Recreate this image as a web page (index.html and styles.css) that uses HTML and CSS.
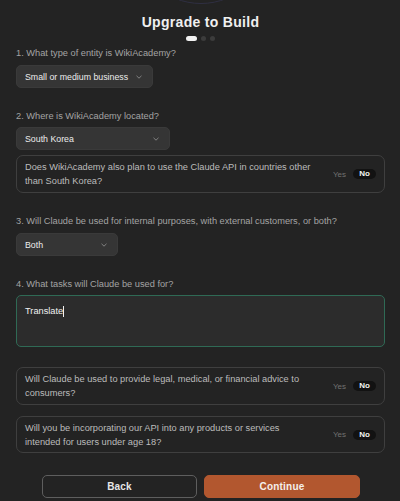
FILE: index.html
```html
<!DOCTYPE html>
<html>
<head>
<meta charset="utf-8">
<link rel="stylesheet" href="styles.css">
</head>
<body>
<div class="page">
  <div class="logo-ring"></div>
  <h1 class="title">Upgrade to Build</h1>
  <div class="steps">
    <span class="step active"></span>
    <span class="step"></span>
    <span class="step"></span>
  </div>

  <div class="q q-first">1. What type of entity is WikiAcademy?</div>
  <div class="select select-1">
    <span>Small or medium business</span>
    <svg class="chev" width="6" height="4" viewBox="0 0 6 4"><polyline points="0.5,0.8 3,3.2 5.5,0.8" fill="none" stroke="#8a8a8a" stroke-width="0.9"/></svg>
  </div>

  <div class="q">2. Where is WikiAcademy located?</div>
  <div class="select select-2">
    <span>South Korea</span>
    <svg class="chev" width="6" height="4" viewBox="0 0 6 4"><polyline points="0.5,0.8 3,3.2 5.5,0.8" fill="none" stroke="#8a8a8a" stroke-width="0.9"/></svg>
  </div>
  <div class="card card-sub">
    <p>Does WikiAcademy also plan to use the Claude API in countries other than South Korea?</p>
    <div class="toggle"><span class="yes">Yes</span><span class="no">No</span></div>
  </div>

  <div class="q">3. Will Claude be used for internal purposes, with external customers, or both?</div>
  <div class="select select-3">
    <span>Both</span>
    <svg class="chev" width="6" height="4" viewBox="0 0 6 4"><polyline points="0.5,0.8 3,3.2 5.5,0.8" fill="none" stroke="#8a8a8a" stroke-width="0.9"/></svg>
  </div>

  <div class="q">4. What tasks will Claude be used for?</div>
  <div class="textarea"><span>Translate</span><span class="caret"></span></div>

  <div class="card card-a">
    <p>Will Claude be used to provide legal, medical, or financial advice to consumers?</p>
    <div class="toggle"><span class="yes">Yes</span><span class="no">No</span></div>
  </div>
  <div class="card card-b">
    <p>Will you be incorporating our API into any products or services intended for users under age 18?</p>
    <div class="toggle"><span class="yes">Yes</span><span class="no">No</span></div>
  </div>

  <div class="actions">
    <button class="btn btn-back">Back</button>
    <button class="btn btn-continue">Continue</button>
  </div>
</div>
</body>
</html>
```

FILE: styles.css
```css
html, body {
  margin: 0;
  padding: 0;
  background: #232323;
}
body {
  width: 400px;
  height: 501px;
  overflow: hidden;
  font-family: "Liberation Sans", Arial, sans-serif;
}
.page {
  padding: 0 15px 0 16px;
  display: flex;
  flex-direction: column;
  align-items: flex-start;
}
.logo-ring {
  align-self: center;
  width: 136px;
  height: 136px;
  margin-top: -132px;
  border: 1px solid #2f2f42;
  border-radius: 50%;
  box-sizing: border-box;
  flex-shrink: 0;
}
.title {
  align-self: center;
  margin: 8px 0 0;
  font-size: 14px;
  line-height: 20px;
  font-weight: 700;
  letter-spacing: 0.3px;
  color: #f0f0f0;
}
.steps {
  align-self: center;
  display: flex;
  gap: 4px;
  margin-top: 4px;
  height: 5px;
}
.step {
  width: 5px;
  height: 5px;
  border-radius: 3px;
  background: #3c3c3c;
}
.step.active {
  width: 11px;
  background: #f2f2f2;
}
.q {
  margin-top: 22px;
  font-size: 9.25px;
  line-height: 12px;
  color: #a3a3a3;
}
.q-first {
  margin-top: 6px;
}
.select {
  margin-top: 6px;
  height: 23px;
  box-sizing: border-box;
  padding: 0 10px 0 8px;
  display: flex;
  align-items: center;
  justify-content: space-between;
  background: #353535;
  border: 1px solid #3a3a3a;
  border-radius: 5px;
  font-size: 8.8px;
  color: #ececec;
}
.select-1 { width: 137px; }
.select-2 { width: 154px; margin-top: 5px; }
.select-3 { width: 102px; }
.chev { display: block; }
.card {
  align-self: stretch;
  margin-top: 5px;
  height: 38px;
  box-sizing: border-box;
  padding: 0 8px 0 8px;
  display: flex;
  align-items: center;
  justify-content: space-between;
  border: 1px solid #3f3f3f;
  border-radius: 7px;
}
.card p {
  margin: 0;
  width: 292px;
  font-size: 9.25px;
  line-height: 14px;
  color: #bcbcbc;
}
.card-a { margin-top: 20px; }
.card-b { margin-top: 11px; height: 37px; }
.toggle {
  display: flex;
  align-items: center;
  gap: 7px;
  font-size: 8px;
}
.yes {
  color: #727272;
}
.no {
  width: 23px;
  height: 10px;
  line-height: 10px;
  text-align: center;
  border-radius: 5px;
  background: #121212;
  color: #f2f2f2;
  font-weight: 700;
}
.textarea {
  align-self: stretch;
  margin-top: 5px;
  height: 52px;
  box-sizing: border-box;
  padding: 9px 8px;
  background: #2c2c2c;
  border: 1px solid #2f6a55;
  border-radius: 5px;
  font-size: 9.25px;
  line-height: 12px;
  color: #f0f0f0;
  display: flex;
  align-items: flex-start;
}
.caret {
  display: inline-block;
  width: 1px;
  height: 11px;
  margin-top: 1px;
  background: #f0f0f0;
}
.actions {
  margin: 22px 0 0 26px;
  display: flex;
  gap: 7px;
}
.btn {
  width: 155px;
  height: 23px;
  box-sizing: border-box;
  border-radius: 5px;
  font-family: "Liberation Sans", Arial, sans-serif;
  font-size: 10px;
  font-weight: 700;
  letter-spacing: 0.2px;
  padding: 0;
}
.btn-back {
  background: transparent;
  border: 1px solid #5e5e5e;
  color: #e6e6e6;
}
.btn-continue {
  width: 156px;
  background: #b2572f;
  border: 1px solid #b2572f;
  color: #f5f0ec;
}
```
